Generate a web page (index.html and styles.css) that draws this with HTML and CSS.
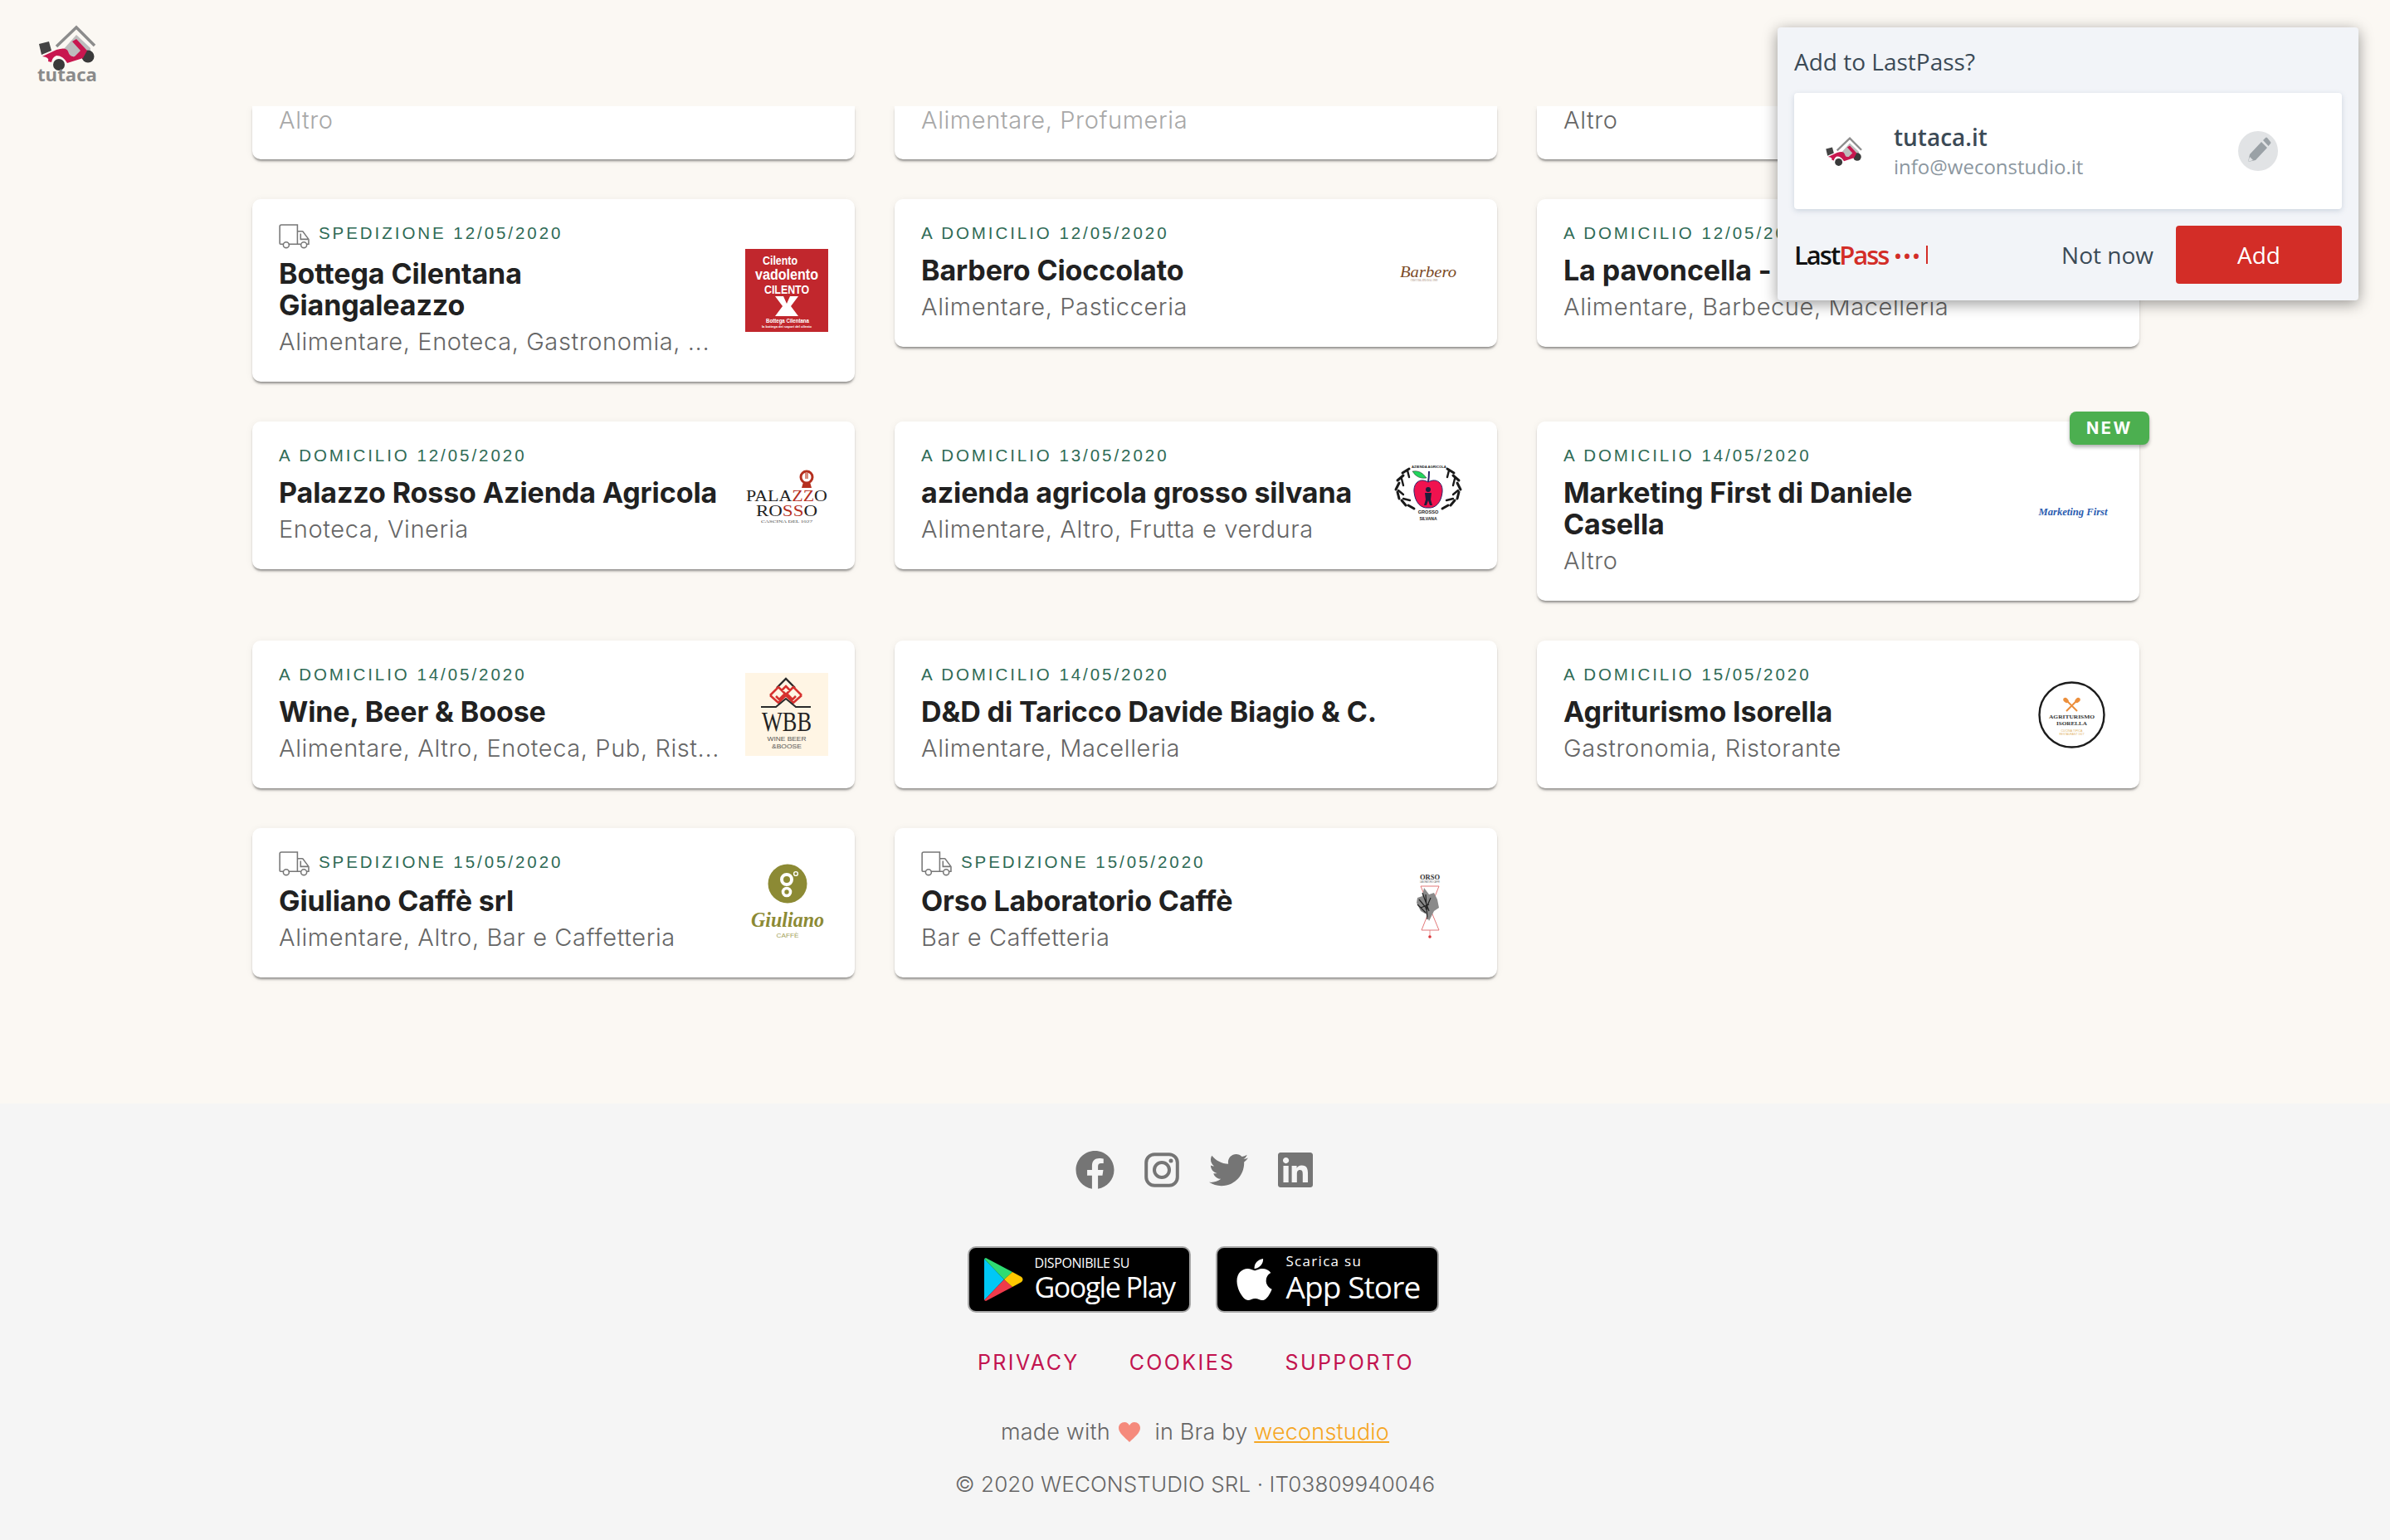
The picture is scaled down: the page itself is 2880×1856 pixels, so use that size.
FILE: index.html
```html
<!DOCTYPE html>
<html lang="it">
<head>
<meta charset="utf-8">
<title>tutaca</title>
<link rel="stylesheet" href="styles.css">
</head>
<body>
<svg class="defs" width="0" height="0" aria-hidden="true">
  <symbol id="scooter" viewBox="15 5 72 56">
    <path d="M38 32 L62 9 L84 31" fill="none" stroke="#8c8c8c" stroke-width="3.5"/>
    <path d="M46 36 L62 18 L79 34 L79 44 L56 44z" fill="#bdbdbd"/>
    <path d="M17 29 L29 26 L32 37 L20 42z" fill="#444"/>
    <circle cx="41" cy="54" r="7" fill="#3a3a3a"/>
    <circle cx="76" cy="44" r="7.5" fill="#3a3a3a"/>
    <path d="M21 44 L38 36 Q50 32 52 38 Q54 45 60 44 L67 37 L57 26 L62 23 L75 37 L70 46 L51 52 Q46 43 38 43 Q33 45 32 51 L28 50 Q30 45 21 44z" fill="#c8174f"/>
  </symbol>
  <symbol id="truck" viewBox="0 0 40 31">
    <path d="M6 25 H2 Q1 25 1 24 V3 Q1 1 3 1 H23 V25 H12 M23 9 H29 Q30 9 31 11 L37 19 V25 H35 M27 25 H23 M27 12 V19 H36" fill="none" stroke="#777" stroke-width="1.6"/>
    <circle cx="9" cy="26" r="3.6" fill="none" stroke="#777" stroke-width="1.6"/>
    <circle cx="31" cy="26" r="3.6" fill="none" stroke="#777" stroke-width="1.6"/>
  </symbol>
</svg>

<header class="topbar">
  <a class="brand" href="#">
    <svg class="brand-mark" viewBox="0 0 100 84" role="img" aria-label="tutaca">
      <use href="#scooter" x="15" y="5" width="72" height="56"/>
      <text x="15" y="74" textLength="72" lengthAdjust="spacingAndGlyphs" class="brand-word">tutaca</text>
    </svg>
  </a>
</header>

<main class="listing">
  <article class="card card--cut"><p class="card-cat card-cat--faded">Altro</p></article>
  <article class="card card--cut"><p class="card-cat card-cat--faded">Alimentare, Profumeria</p></article>
  <article class="card card--cut"><p class="card-cat">Altro</p></article>

  <article class="card card--roomy">
    <div class="card-body">
      <div class="card-date card-date--ship"><svg class="truck"><use href="#truck"/></svg><span>SPEDIZIONE 12/05/2020</span></div>
      <h3 class="card-title">Bottega Cilentana<br>Giangaleazzo</h3>
      <p class="card-cat">Alimentare, Enoteca, Gastronomia, ...</p>
    </div>
    <svg class="shop-logo" viewBox="0 0 100 100">
      <rect width="100" height="100" fill="#c1272d"/>
      <g class="lg-cond" fill="#fff" text-anchor="middle">
        <text x="42" y="19" font-size="14" textLength="42" lengthAdjust="spacingAndGlyphs">Cilento</text>
        <text x="50" y="37" font-size="18" textLength="76" lengthAdjust="spacingAndGlyphs">vadolento</text>
        <text x="50" y="54" font-size="14" textLength="54" lengthAdjust="spacingAndGlyphs">CILENTO</text>
        <text x="51" y="89" font-size="8" textLength="52" lengthAdjust="spacingAndGlyphs">Bottega Cilentana</text>
        <text x="50" y="95" font-size="3" textLength="60" lengthAdjust="spacingAndGlyphs">la bottega dei sapori del cilento</text>
      </g>
      <path d="M36 57 H46 L50 66 L54 57 H64 L55 69 L64 81 H36 L45 69z" fill="#fff"/>
    </svg>
  </article>

  <article class="card">
    <div class="card-body">
      <div class="card-date"><span>A DOMICILIO 12/05/2020</span></div>
      <h3 class="card-title">Barbero Cioccolato</h3>
      <p class="card-cat">Alimentare, Pasticceria</p>
    </div>
    <svg class="shop-logo" viewBox="0 0 100 100">
      <text x="49" y="55" text-anchor="middle" font-size="19" textLength="68" lengthAdjust="spacingAndGlyphs" class="lg-script" fill="#7b4a26">Barbero</text>
      <text x="44" y="60" text-anchor="middle" font-size="3" class="lg-serif" fill="#9a7a60">CIOCCOLATO DAL 1909</text>
    </svg>
  </article>

  <article class="card">
    <div class="card-body">
      <div class="card-date"><span>A DOMICILIO 12/05/2020</span></div>
      <h3 class="card-title">La pavoncella -</h3>
      <p class="card-cat">Alimentare, Barbecue, Macelleria</p>
    </div>
  </article>

  <article class="card">
    <div class="card-body">
      <div class="card-date"><span>A DOMICILIO 12/05/2020</span></div>
      <h3 class="card-title">Palazzo Rosso Azienda Agricola</h3>
      <p class="card-cat">Enoteca, Vineria</p>
    </div>
    <svg class="shop-logo" viewBox="0 0 100 100">
      <circle cx="74" cy="28" r="7" fill="none" stroke="#b5301f" stroke-width="3"/>
      <path d="M70 34 L78 34 L80 41 L68 41z" fill="#b5301f"/>
      <path d="M72 23 L76 23 L76 30 L72 30z" fill="#d98c7c"/>
      <g class="lg-serif" text-anchor="middle">
        <text x="50" y="57" font-size="19" textLength="98" lengthAdjust="spacingAndGlyphs" fill="#222">PALA<tspan fill="#b5301f">ZZ</tspan>O</text>
        <text x="50" y="75" font-size="19" textLength="74" lengthAdjust="spacingAndGlyphs" fill="#222">RO<tspan fill="#b5301f">SS</tspan>O</text>
        <text x="50" y="83" font-size="5" textLength="62" lengthAdjust="spacingAndGlyphs" fill="#444">CASCINA DEL 1027</text>
      </g>
    </svg>
  </article>

  <article class="card">
    <div class="card-body">
      <div class="card-date"><span>A DOMICILIO 13/05/2020</span></div>
      <h3 class="card-title">azienda agricola grosso silvana</h3>
      <p class="card-cat">Alimentare, Altro, Frutta e verdura</p>
    </div>
    <svg class="shop-logo" viewBox="0 0 100 100">
      <text x="50" y="17" text-anchor="middle" font-size="4.2" font-weight="700" class="lg-sans" fill="#222">AZIENDA AGRICOLA</text>
      <path d="M49 34 Q50 28 50 21" fill="none" stroke="#2b2468" stroke-width="2"/>
      <path d="M30 21 Q40 19 47 29 Q36 31 30 21z" fill="#22d45c" stroke="#222" stroke-width=".5"/>
      <path d="M49 34 C60 28 67 36 66 46 C65 58 58 66 49 65 C40 66 33 58 32 46 C31 36 38 28 49 34z" fill="#f0124f" stroke="#2b2468" stroke-width="1"/>
      <circle cx="49" cy="43" r="3" fill="#1d1d3a"/>
      <path d="M45 47 H53 L52 55 L54 62 H51 L49 56 L47 62 H44 L46 55z" fill="#1d1d3a"/>
      <g fill="none" stroke="#1a1a1a" stroke-width="3" stroke-linecap="round">
        <path d="M26 18 L18 23 M19 26 L12 32 M14 35 L10 43 M12 46 L14 54 M17 56 L22 62 M25 62 L32 66"/>
        <path d="M72 18 L80 23 M79 26 L86 32 M84 35 L88 43 M86 46 L84 54 M81 56 L76 62 M73 62 L66 66"/>
        <path d="M24 20 L26 28 M17 30 L19 38 M13 44 L19 49 M19 54 L27 56" stroke-width="2.4"/>
        <path d="M74 20 L72 28 M81 30 L79 38 M85 44 L79 49 M79 54 L71 56" stroke-width="2.4"/>
      </g>
      <text x="49" y="72" text-anchor="middle" font-size="5.6" font-weight="700" class="lg-sans" fill="#222">GROSSO</text>
      <text x="49" y="80" text-anchor="middle" font-size="5" font-weight="700" class="lg-sans" fill="#222">SILVANA</text>
    </svg>
  </article>

  <article class="card">
    <span class="badge-new">NEW</span>
    <div class="card-body">
      <div class="card-date"><span>A DOMICILIO 14/05/2020</span></div>
      <h3 class="card-title">Marketing First di Daniele<br>Casella</h3>
      <p class="card-cat">Altro</p>
    </div>
    <svg class="shop-logo" viewBox="0 0 100 100">
      <text x="52" y="55" text-anchor="middle" font-size="12.5" textLength="83" lengthAdjust="spacingAndGlyphs" class="lg-script lg-script--bold" fill="#2a5cb0">Marketing First</text>
    </svg>
  </article>

  <article class="card">
    <div class="card-body">
      <div class="card-date"><span>A DOMICILIO 14/05/2020</span></div>
      <h3 class="card-title">Wine, Beer &amp; Boose</h3>
      <p class="card-cat">Alimentare, Altro, Enoteca, Pub, Rist...</p>
    </div>
    <svg class="shop-logo" viewBox="0 0 100 100">
      <rect width="100" height="100" fill="#fff5e4"/>
      <path d="M38 18 L49 7 L60 18" fill="none" stroke="#2a2a2a" stroke-width="2.4"/>
      <path d="M30 27 L40 17 L48 25 L41 32 L37 28 M68 27 L58 17 L50 25 L57 32 L61 28 M30 27 L40 36 L49 27 L58 36 L68 27 M49 16 L54 21 L49 26 L44 21z" fill="none" stroke="#d6322f" stroke-width="2.6"/>
      <path d="M19 41 H37 L49 31 L61 41 H79" fill="none" stroke="#2a2a2a" stroke-width="2"/>
      <g class="lg-serif" text-anchor="middle" fill="#222">
        <text x="50" y="70" font-size="33" textLength="60" lengthAdjust="spacingAndGlyphs">WBB</text>
      </g>
      <g class="lg-sans" text-anchor="middle" fill="#555">
        <text x="50" y="82" font-size="7" textLength="47" lengthAdjust="spacingAndGlyphs">WINE BEER</text>
        <text x="50" y="91" font-size="7" textLength="36" lengthAdjust="spacingAndGlyphs">&amp;BOOSE</text>
      </g>
    </svg>
  </article>

  <article class="card">
    <div class="card-body">
      <div class="card-date"><span>A DOMICILIO 14/05/2020</span></div>
      <h3 class="card-title">D&amp;D di Taricco Davide Biagio &amp; C.</h3>
      <p class="card-cat">Alimentare, Macelleria</p>
    </div>
  </article>

  <article class="card">
    <div class="card-body">
      <div class="card-date"><span>A DOMICILIO 15/05/2020</span></div>
      <h3 class="card-title">Agriturismo Isorella</h3>
      <p class="card-cat">Gastronomia, Ristorante</p>
    </div>
    <svg class="shop-logo" viewBox="0 0 100 100">
      <circle cx="50.5" cy="50.5" r="39" fill="#fff" stroke="#1c1c1c" stroke-width="2.4"/>
      <path d="M44 33 L57 46 M57 33 L44 46" stroke="#ec8f3c" stroke-width="2"/>
      <ellipse cx="43.5" cy="33" rx="2.6" ry="3.6" transform="rotate(-45 43.5 33)" fill="#ec8f3c"/>
      <ellipse cx="57.5" cy="33" rx="2.6" ry="3.6" transform="rotate(45 57.5 33)" fill="#ec8f3c"/>
      <g class="lg-serif" text-anchor="middle" font-weight="700" fill="#333">
        <text x="50.5" y="55" font-size="6" textLength="55" lengthAdjust="spacingAndGlyphs">AGRITURISMO</text>
        <text x="50.5" y="63" font-size="6" textLength="37" lengthAdjust="spacingAndGlyphs">ISORELLA</text>
      </g>
      <g class="lg-sans" text-anchor="middle" fill="#e2b366">
        <text x="50.5" y="71" font-size="2.8" textLength="26" lengthAdjust="spacingAndGlyphs">CUCINA TIPICA</text>
        <text x="50.5" y="75" font-size="2.8" textLength="30" lengthAdjust="spacingAndGlyphs">RESTAURANT 1927</text>
      </g>
    </svg>
  </article>

  <article class="card">
    <div class="card-body">
      <div class="card-date card-date--ship"><svg class="truck"><use href="#truck"/></svg><span>SPEDIZIONE 15/05/2020</span></div>
      <h3 class="card-title">Giuliano Caffè srl</h3>
      <p class="card-cat">Alimentare, Altro, Bar e Caffetteria</p>
    </div>
    <svg class="shop-logo" viewBox="0 0 100 100">
      <circle cx="51" cy="27" r="23.5" fill="#8c8a34"/>
      <circle cx="50" cy="22" r="6" fill="none" stroke="#fff" stroke-width="4"/>
      <circle cx="50" cy="37" r="4.5" fill="none" stroke="#fff" stroke-width="3.6"/>
      <circle cx="61" cy="15" r="2.4" fill="none" stroke="#fff" stroke-width="1.4"/>
      <text x="51" y="79" text-anchor="middle" font-size="25" textLength="88" lengthAdjust="spacingAndGlyphs" class="lg-script lg-script--bold" fill="#8c8a34">Giuliano</text>
      <text x="51" y="92" text-anchor="middle" font-size="7.5" textLength="27" lengthAdjust="spacingAndGlyphs" class="lg-sans" fill="#a3a15a">CAFFÈ</text>
    </svg>
  </article>

  <article class="card">
    <div class="card-body">
      <div class="card-date card-date--ship"><svg class="truck"><use href="#truck"/></svg><span>SPEDIZIONE 15/05/2020</span></div>
      <h3 class="card-title">Orso Laboratorio Caffè</h3>
      <p class="card-cat">Bar e Caffetteria</p>
    </div>
    <svg class="shop-logo" viewBox="0 0 100 100">
      <text x="51" y="22" text-anchor="middle" font-size="8.5" font-weight="700" class="lg-serif" fill="#333">ORSO</text>
      <text x="51" y="26" text-anchor="middle" font-size="2.6" textLength="24" class="lg-sans" fill="#777">LABORATORIO CAFFÈ</text>
      <path d="M40 30 H62 L41 83 H62 L40 30" fill="none" stroke="#e2797a" stroke-width="1"/>
      <path d="M51 83 V90" stroke="#e2797a" stroke-width=".8"/>
      <circle cx="51" cy="91" r="1.8" fill="#d9363a"/>
      <path d="M44 32 L50 40 L56 38 L60 46 L62 56 L56 60 L50 72 L47 64 L40 60 L35 50 L36 44 L42 42z" fill="#8a8a8a"/>
      <path d="M38 46 L48 58 M42 38 L50 60 M36 52 L46 62 M46 40 L48 70 M52 44 L46 58 M40 56 L50 52" stroke="#222" stroke-width="1.2"/>
    </svg>
  </article>
</main>

<aside class="lp-popup">
  <div class="lp-title">Add to LastPass?</div>
  <div class="lp-site">
    <svg class="lp-favicon"><use href="#scooter"/></svg>
    <div class="lp-account">
      <div class="lp-name">tutaca.it</div>
      <div class="lp-mail">info@weconstudio.it</div>
    </div>
    <span class="lp-edit">
      <svg viewBox="0 0 48 48" width="48" height="48"><path d="M12 37 L14 28 L28 13 L35 20 L21 35z M30 11 L33 8 Q34 7 35 8 L39 13 Q40 14 39 15 L36.500 18z" fill="#9aa1a6"/><path d="M12 37 L14 31 L18 35z" fill="#e1e3e5"/></svg>
    </span>
  </div>
  <div class="lp-actions">
    <div class="lp-brand"><span class="lp-last">Last</span><span class="lp-pass">Pass</span><span class="lp-dots">•••</span><span class="lp-bar"></span></div>
    <span class="lp-later">Not now</span>
    <button class="lp-add">Add</button>
  </div>
</aside>

<footer class="site-footer">
  <div class="socials">
    <svg class="soc soc-fb" viewBox="8 8 496 496"><path d="M504 256C504 119 393 8 256 8S8 119 8 256c0 123.78 90.69 226.38 209.25 245V327.69h-63V256h63v-54.64c0-62.15 37-96.48 93.67-96.48 27.14 0 55.52 4.84 55.52 4.84v61h-31.28c-30.8 0-40.41 19.12-40.41 38.73V256h68.78l-11 71.69h-57.78V501C413.31 482.38 504 379.78 504 256z"/></svg>
    <svg class="soc soc-ig" viewBox="0 0 42 42"><rect x="2.200" y="2.200" width="37.600" height="37.600" rx="10" fill="none" stroke="#757575" stroke-width="4"/><circle cx="21" cy="21" r="9" fill="none" stroke="#757575" stroke-width="4"/><circle cx="32" cy="10" r="2.500" fill="#757575"/></svg>
    <svg class="soc soc-tw" viewBox="0 47 512 417"><path d="M459.37 151.716c.325 4.548.325 9.097.325 13.645 0 138.72-105.583 298.558-298.558 298.558-59.452 0-114.68-17.219-161.137-47.106 8.447.974 16.568 1.299 25.34 1.299 49.055 0 94.213-16.568 130.274-44.832-46.132-.975-84.792-31.188-98.112-72.772 6.498.974 12.995 1.624 19.818 1.624 9.421 0 18.843-1.3 27.614-3.573-48.081-9.747-84.143-51.98-84.143-102.985v-1.299c13.969 7.797 30.214 12.67 47.431 13.319-28.264-18.843-46.781-51.005-46.781-87.391 0-19.492 5.197-37.36 14.294-52.954 51.655 63.675 129.3 105.258 216.365 109.807-1.624-7.797-2.599-15.918-2.599-24.04 0-57.828 46.782-104.934 104.934-104.934 30.213 0 57.502 12.67 76.67 33.137 23.715-4.548 46.456-13.32 66.599-25.34-7.798 24.366-24.366 44.833-46.132 57.827 21.117-2.273 41.584-8.122 60.426-16.243-14.292 20.791-32.161 39.308-52.628 54.253z"/></svg>
    <svg class="soc soc-li" viewBox="0 32 448 448"><path d="M416 32H31.900C14.300 32 0 46.500 0 64.300v383.400C0 465.500 14.300 480 31.900 480H416c17.600 0 32-14.500 32-32.300V64.300c0-17.800-14.400-32.300-32-32.300zM135.400 416H69V202.200h66.500V416zm-33.200-243c-21.300 0-38.500-17.300-38.500-38.500S80.900 96 102.200 96c21.200 0 38.500 17.300 38.500 38.500 0 21.300-17.200 38.500-38.500 38.500zm282.100 243h-66.400V312c0-24.800-.5-56.700-34.500-56.700-34.600 0-39.900 27-39.900 54.900V416h-66.400V202.200h63.700v29.200h.9c8.900-16.800 30.600-34.500 62.900-34.500 67.200 0 79.700 44.300 79.700 101.900V416z"/></svg>
  </div>

  <div class="stores">
    <a class="store" href="#">
      <svg class="store-play" viewBox="0 0 48 52">
        <path d="M1 1 L25 26 L1 51z" fill="#00c8f5"/>
        <path d="M1 1 L3 0 L35 17 L25 26z" fill="#2fdc72"/>
        <path d="M1 51 L3 52 L35 35 L25 26z" fill="#ee3a4b"/>
        <path d="M35 17 L46 23 Q49 26 46 29 L35 35 L25 26z" fill="#ffc800"/>
      </svg>
      <span class="store-text">
        <span class="store-small store-small--gp">DISPONIBILE SU</span>
        <span class="store-big store-big--gp">Google Play</span>
      </span>
    </a>
    <a class="store store--apple" href="#">
      <svg class="store-apple" viewBox="0 30 384 452"><path fill="#fff" d="M318.700 268.700c-.2-36.700 16.400-64.400 50-84.800-18.800-26.900-47.200-41.700-84.700-44.600-35.500-2.800-74.300 20.700-88.500 20.700-15 0-49.400-19.700-76.400-19.700C63.300 141.200 4 184.800 4 273.500q0 39.300 14.400 81.200c12.800 36.700 59 126.700 107.200 125.200 25.200-.6 43-17.900 75.800-17.900 31.800 0 48.300 17.900 76.400 17.900 48.600-.7 90.400-82.500 102.600-119.300-65.200-30.700-61.700-90-61.700-91.900zm-56.600-164.200c27.300-32.400 24.800-61.900 24-72.500-24.100 1.400-52 16.400-67.900 34.900-17.500 19.800-27.800 44.300-25.600 71.900 26.100 2 49.900-11.400 69.500-34.300z"/></svg>
      <span class="store-text">
        <span class="store-small store-small--as">Scarica su</span>
        <span class="store-big store-big--as">App Store</span>
      </span>
    </a>
  </div>

  <nav class="foot-links">
    <a href="#">PRIVACY</a>
    <a href="#">COOKIES</a>
    <a href="#">SUPPORTO</a>
  </nav>

  <p class="made">made with <svg class="heart" viewBox="0 0 26 24"><path d="M13 24 C7 18 0 13 0 7 C0 3 3 0 7 0 C10 0 12 2 13 4 C14 2 16 0 19 0 C23 0 26 3 26 7 C26 13 19 18 13 24z" fill="#f58a7c"/></svg> in Bra by <a href="#">weconstudio</a></p>
  <p class="copy">© 2020 WECONSTUDIO SRL · IT03809940046</p>
</footer>
</body>
</html>
```

FILE: styles.css
```css
* { box-sizing: border-box; }
html, body { margin: 0; padding: 0; }
body {
  position: relative;
  background: #fbf8f3;
  font-family: "Inter", "Liberation Sans", sans-serif;
  color: #222;
}
.defs { position: absolute; }
p, h3 { margin: 0; }

/* top bar */
.topbar {
  position: relative;
  z-index: 2;
  height: 128px;
  padding: 24px 0 0 30px;
  background: #fbf8f3;
}
.brand { display: block; width: 100px; height: 84px; }
.brand-mark { display: block; width: 100px; height: 84px; }
.brand-word { font: 700 21px "Open Sans", sans-serif; fill: #8a8a8a; }

/* listing */
.listing {
  display: grid;
  grid-template-columns: repeat(3, 726px);
  gap: 48px;
  align-items: start;
  margin-left: 304px;
  padding-bottom: 152px;
}
.card {
  position: relative;
  display: flex;
  align-items: center;
  gap: 16px;
  padding: 28px 32px 33px;
  background: #fff;
  border-radius: 10px;
  box-shadow: 0 3px 3px -1px rgba(0, 0, 0, .42), 0 1px 10px rgba(0, 0, 0, .06);
}
.card--cut {
  display: block;
  height: 64px;
  padding: 2px 32px 0;
  border-radius: 0 0 10px 10px;
}
.card-body { flex: 1; min-width: 0; }
.card-date {
  display: flex;
  align-items: flex-start;
  gap: 9px;
  height: 26px;
  margin-bottom: 13px;
  font: 400 20.5px/26px "Liberation Sans", sans-serif;
  letter-spacing: 2.95px;
  color: #2f6b56;
  white-space: nowrap;
}
.card-date--ship { height: 30px; margin-bottom: 11px; }
.truck { flex: none; width: 39px; height: 30px; }
.card--roomy .card-date { height: 32px; }
.card--roomy .truck { margin-top: 2px; }
.card-title {
  font: 700 34px/38px "Inter", sans-serif;
  letter-spacing: -.1px;
  color: #212121;
}
.card-cat {
  margin-top: 10px;
  font: 300 29px/30px "Inter", sans-serif;
  letter-spacing: .6px;
  color: #666;
  white-space: nowrap;
}
.card--cut .card-cat { margin-top: 0; }
.card-cat--faded { color: #a8a8a8; }
.shop-logo { flex: none; width: 100px; height: 100px; display: block; margin-top: 5px; }
.lg-cond { font-family: "Liberation Sans", sans-serif; font-weight: 700; }
.lg-serif { font-family: "Liberation Serif", serif; }
.lg-sans { font-family: "Liberation Sans", sans-serif; }
.lg-script { font-family: "Liberation Serif", serif; font-style: italic; }
.lg-script--bold { font-weight: 700; }

.badge-new {
  position: absolute;
  top: -12px;
  right: -12px;
  width: 96px;
  height: 40px;
  border-radius: 8px;
  background: #4caf50;
  color: #fff;
  font: 700 20px/40px "Inter", sans-serif;
  letter-spacing: 2.6px;
  text-align: center;
  box-shadow: 0 3px 4px rgba(0, 0, 0, .3);
}

/* LastPass popup */
.lp-popup {
  position: absolute;
  z-index: 5;
  top: 33px;
  right: 38px;
  width: 700px;
  height: 329px;
  padding: 20px;
  background: #f2f4f8;
  border-radius: 4px;
  box-shadow: 0 4px 18px rgba(0, 0, 0, .4);
  font-family: "Open Sans", sans-serif;
  color: #3b4a56;
}
.lp-title { height: 59px; font-size: 28px; line-height: 42px; }
.lp-site {
  display: flex;
  align-items: center;
  height: 140px;
  padding: 0 77px 0 37px;
  background: #fff;
  border-radius: 4px;
  box-shadow: 0 2px 6px rgba(90, 120, 150, .25);
}
.lp-favicon { flex: none; width: 46px; height: 36px; }
.lp-account { flex: 1; margin-left: 37px; padding-top: 2px; }
.lp-name { font-size: 28px; line-height: 36px; font-weight: 600; }
.lp-mail { font-size: 24px; line-height: 36px; color: #8c979f; }
.lp-edit {
  flex: none;
  width: 48px;
  height: 48px;
  border-radius: 50%;
  background: #e1e3e5;
}
.lp-edit svg { display: block; }
.lp-actions { display: flex; align-items: center; height: 70px; margin-top: 20px; }
.lp-brand { display: flex; align-items: center; flex: 1; font-size: 31px; font-weight: 600; letter-spacing: -2px; }
.lp-last { color: #111; }
.lp-pass { color: #d32d27; }
.lp-dots { margin-left: 7px; font-size: 24px; letter-spacing: 2px; color: #d32d27; }
.lp-bar { width: 2px; height: 22px; margin-left: 5px; background: #d32d27; }
.lp-later { margin-right: 27px; font-size: 28px; }
.lp-add {
  width: 200px;
  height: 70px;
  border: 0;
  border-radius: 4px;
  background: #d32d27;
  color: #fff;
  font: 400 28px "Open Sans", sans-serif;
}

/* footer */
.site-footer {
  height: 526px;
  padding-top: 57px;
  background: #f5f5f5;
  text-align: center;
}
.socials { display: flex; justify-content: center; align-items: center; gap: 36px; height: 46px; margin: 0 2px 69px 0; }
.soc { display: block; fill: #757575; }
.soc-fb { width: 47px; height: 46px; }
.soc-ig { width: 42px; height: 42px; }
.soc-tw { width: 47px; height: 40px; }
.soc-li { width: 42px; height: 42px; }

.stores { display: flex; justify-content: center; gap: 30px; margin: 0 0 45px 19px; }
.store {
  display: flex;
  align-items: center;
  width: 269px;
  height: 80px;
  padding-left: 17px;
  background: #000;
  border: 2px solid #a6a6a6;
  border-radius: 10px;
  color: #fff;
  text-decoration: none;
  text-align: left;
}
.store--apple { padding-left: 23px; }
.store-play { flex: none; width: 48px; height: 52px; margin-right: 14px; }
.store-apple { flex: none; width: 43px; height: 52px; margin-right: 17px; }
.store-text { display: flex; flex-direction: column; white-space: nowrap; }
.store-small { font-family: "Open Sans", sans-serif; }
.store-small--gp { font-size: 16px; line-height: 20px; letter-spacing: -.4px; margin-top: -3px; }
.store-small--as { font-size: 17px; line-height: 20px; letter-spacing: 1.3px; margin-top: -2px; }
.store-big { font-family: "Open Sans", sans-serif; font-weight: 500; }
.store-big--gp { font-size: 34px; line-height: 38px; letter-spacing: -1.5px; }
.store-big--as { font-size: 37px; line-height: 42px; letter-spacing: -.9px; }

.foot-links { display: flex; justify-content: center; gap: 60px; height: 30px; margin: 0 0 51px 2px; }
.foot-links a {
  font: 400 25px/30px "Inter", sans-serif;
  letter-spacing: 2.4px;
  color: #c2134f;
  text-decoration: none;
}
.made, .copy { font: 300 27px/36px "Inter", sans-serif; color: #666; }
.made { margin-bottom: 27px; letter-spacing: .2px; }
.made a { color: #f5a623; }
.copy { font-size: 26px; letter-spacing: .13px; }
.heart { width: 26px; height: 24px; margin: 0 10px 0 2px; vertical-align: -3px; }
```
